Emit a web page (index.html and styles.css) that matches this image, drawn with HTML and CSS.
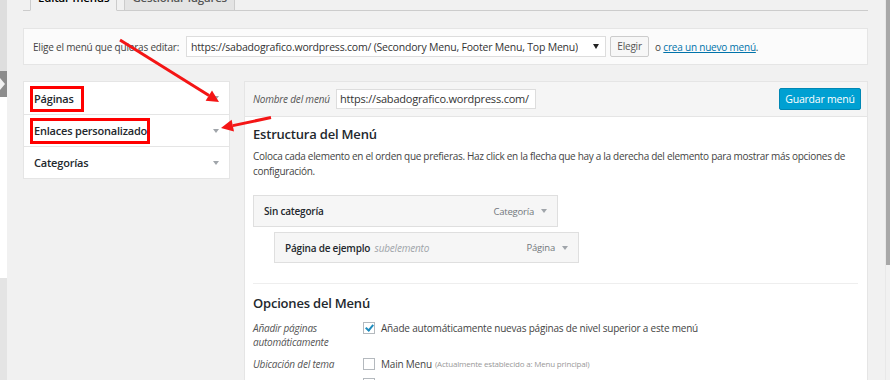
FILE: index.html
```html
<!DOCTYPE html>
<html lang="es">

<head>
    <meta charset="UTF-8">
    <title>Menús</title>
    <link rel="stylesheet" href="styles.css">
</head>

<body>
    <div class="page">
        <!-- collapsed admin sidebar edge -->
        <div class="edge">
            <div class="edge-top"></div>
            <div class="edge-toggle">
                <svg width="7" height="26" viewBox="0 0 7 26">
                    <polygon points="0,0 7,0 7,26 0,26 0,19 5,13 0,7" fill="#8c8c8c" />
                </svg>
            </div>
            <div class="edge-mid"></div>
            <div class="edge-bottom"></div>
        </div>

        <div class="wrap">
            <div class="tabs">
                <span class="tab active">Editar menús</span>
                <span class="tab">Gestionar lugares</span>
            </div>

            <div class="manage">
                <span class="label">Elige el menú que quieras editar:</span>
                <span class="select"><span class="select-text">https://sabadografico.wordpress.com/ (Secondory Menu, Footer Menu, Top Menu)</span><i class="select-arrow"></i></span>
                <span class="btn">Elegir</span>
                <span class="or">o <a href="#">crea un nuevo menú</a>.</span>
            </div>

            <div class="cols">
                <div class="accordion">
                    <div class="acc-row first"><span class="mark">Páginas</span><i class="caret"></i></div>
                    <div class="acc-row"><span class="mark wide">Enlaces personalizado</span><i class="caret"></i></div>
                    <div class="acc-row"><span class="acc-title">Categorías</span><i class="caret"></i></div>
                </div>

                <div class="menu">
                    <div class="menu-head">
                        <span class="name-label">Nombre del menú</span>
                        <span class="name-input">https://sabadografico.wordpress.com/</span>
                        <span class="save">Guardar menú</span>
                    </div>
                    <div class="menu-body">
                        <h3>Estructura del Menú</h3>
                        <p class="help">Coloca cada elemento en el orden que prefieras. Haz click en la flecha que hay a la derecha del elemento para mostrar más opciones de configuración.</p>

                        <div class="item">
                            <span class="item-title">Sin categoría</span>
                            <span class="item-type">Categoría</span><i class="caret"></i>
                        </div>
                        <div class="item sub">
                            <span class="item-title">Página de ejemplo <em>subelemento</em></span>
                            <span class="item-type">Página</span><i class="caret"></i>
                        </div>

                        <div class="divider"></div>

                        <h3>Opciones del Menú</h3>
                        <div class="opt">
                            <span class="opt-label">Añadir páginas automáticamente</span>
                            <span class="opt-value"><i class="check on"></i>Añade automáticamente nuevas páginas de nivel superior a este menú</span>
                        </div>
                        <div class="opt">
                            <span class="opt-label">Ubicación del tema</span>
                            <span class="opt-list">
                                <span class="opt-value"><i class="check"></i>Main Menu <small>(Actualmente establecido a: Menu principal)</small></span>
                                <span class="opt-value"><i class="check on"></i>Secondary Menu</span>
                            </span>
                        </div>
                    </div>
                </div>
            </div>
        </div>

        <div class="scroll">
            <div class="thumb"></div>
        </div>

        <!-- red annotation arrows drawn over the page -->
        <svg class="arrows" width="890" height="380" viewBox="0 0 890 380">
            <line x1="120" y1="40" x2="209" y2="95.6" stroke="#f41515" stroke-width="3" />
            <polygon points="219,102 205.6,100.7 212,90.5" fill="#f41515" />
            <line x1="271" y1="117.5" x2="232.8" y2="125.6" stroke="#f41515" stroke-width="3" />
            <polygon points="221,128 234,131.5 231.6,119.7" fill="#f41515" />
        </svg>
    </div>
</body>

</html>
```

FILE: styles.css
```css
* {
    padding: 0;
    margin: 0;
    box-sizing: border-box;
}

body {
    width: 890px;
    height: 380px;
    overflow: hidden;
    background: #f1f1f1;
    font-family: "Open Sans", "Noto Sans", sans-serif;
    font-size: 10px;
    letter-spacing: -0.2px;
    color: #444;
}

.page {
    position: relative;
    height: 380px;
    display: flex;
}

/* sidebar edge */
.edge {
    width: 7px;
    display: flex;
    flex-direction: column;
}

.edge-top {
    height: 71px;
    background: #dedede;
}

.edge-toggle {
    height: 26px;
    display: flex;
}

.edge-mid {
    height: 181px;
    background: #fff;
}

.edge-bottom {
    flex: 1;
    background: #e4e4e4;
}

.wrap {
    width: 878px;
    padding: 0 17px 0 16px;
}

/* tabs */
.tabs {
    margin-top: -17px;
    padding-left: 7px;
    border-bottom: 1px solid #ccc;
    display: flex;
    gap: 7px;
}

.tab {
    padding: 5px 7px 3px;
    line-height: 18px;
    font-size: 11.5px;
    font-weight: 600;
    color: #555;
    background: #e4e4e4;
    border: 1px solid #ccc;
    margin-bottom: -1px;
}

.tab.active {
    background: #f1f1f1;
    border-bottom-color: #f1f1f1;
    color: #000;
}

/* menu chooser */
.manage {
    margin-top: 17px;
    height: 37px;
    padding-left: 9px;
    background: #fbfbfb;
    border: 1px solid #e5e5e5;
    display: flex;
    align-items: center;
}

.label {
    margin-right: 7px;
}

.select {
    width: 420px;
    height: 21px;
    padding: 0 4px;
    background: #fff;
    border: 1px solid #ddd;
    color: #333;
    font-size: 10.5px;
    display: flex;
    align-items: center;
    justify-content: space-between;
}

.select-text {
    white-space: nowrap;
    overflow: hidden;
}

.select-arrow {
    border-left: 3px solid transparent;
    border-right: 3px solid transparent;
    border-top: 5px solid #222;
    margin: 0 2px 0 6px;
}

.btn {
    margin-left: 4px;
    width: 39px;
    height: 21px;
    line-height: 19px;
    text-align: center;
    background: #f7f7f7;
    border: 1px solid #ccc;
    border-radius: 2px;
    color: #555;
}

.or {
    margin-left: 6px;
}

.or a {
    color: #0073aa;
}

/* columns */
.cols {
    margin-top: 16px;
    display: flex;
    gap: 14px;
    align-items: flex-start;
}

.accordion {
    width: 207px;
    background: #fff;
    border: 1px solid #e5e5e5;
}

.acc-row {
    height: 32px;
    padding: 0 10px 0 6px;
    border-top: 1px solid #e5e5e5;
    display: flex;
    align-items: center;
    justify-content: space-between;
    font-size: 11px;
    font-weight: 600;
    color: #23282d;
}

.acc-row.first {
    border-top: none;
}

.acc-title {
    padding-left: 4px;
}

.mark {
    display: inline-block;
    line-height: 20px;
    padding: 0 7px 0 1px;
    border: 3px solid #f00;
    margin-top: 2px;
}

.mark.wide {
    padding-right: 0;
    margin-top: 0;
}

.caret {
    border-left: 3px solid transparent;
    border-right: 3px solid transparent;
    border-top: 4px solid #a0a5aa;
}

/* menu editor */
.menu {
    width: 624px;
    height: 320px;
    background: #fff;
    border: 1px solid #e5e5e5;
}

.menu-head {
    height: 35px;
    padding: 0 6px 0 8px;
    background: #f5f5f5;
    border-bottom: 1px solid #e5e5e5;
    display: flex;
    align-items: center;
}

.name-label {
    font-style: italic;
    color: #555;
    width: 83px;
}

.name-input {
    width: 200px;
    height: 20px;
    padding: 0 3px;
    background: #fff;
    border: 1px solid #ddd;
    font-size: 11px;
    line-height: 18px;
    color: #333;
}

.save {
    margin-left: auto;
    width: 82px;
    height: 22px;
    line-height: 20px;
    text-align: center;
    background: #00a0d2;
    border: 1px solid #0087b4;
    border-radius: 2px;
    color: #fff;
    font-size: 10.5px;
}

.menu-body {
    padding: 8px 9px 0 8px;
}

h3 {
    font-size: 13px;
    font-weight: 600;
    color: #23282d;
    line-height: 18px;
}

.help {
    margin-top: 6px;
    margin-right: -12px;
    line-height: 15px;
    letter-spacing: -0.3px;
}

.item {
    margin-top: 16px;
    width: 305px;
    height: 32px;
    padding: 0 10px 0 10px;
    background: #f6f6f6;
    border: 1px solid #dfdfdf;
    display: flex;
    align-items: center;
    gap: 7px;
}

.item.sub {
    margin-top: 5px;
    margin-left: 21px;
    height: 31px;
}

.item-title {
    flex: 1;
    font-weight: 600;
    color: #23282d;
}

.item-title em {
    margin-left: 2px;
    font-weight: 400;
    color: #a0a5aa;
}

.item-type {
    color: #72777c;
    font-size: 9.5px;
}

.divider {
    margin: 20px 0 10px;
    border-top: 1px solid #eee;
}

.opt {
    margin-top: 8px;
    display: flex;
    align-items: flex-start;
}

.opt+.opt {
    margin-top: 7px;
}

.opt-label {
    width: 110px;
    font-style: italic;
    color: #555;
    line-height: 14px;
    padding-top: 1px;
}

.opt-list {
    display: flex;
    flex-direction: column;
    gap: 5px;
}

.opt-value {
    display: flex;
    align-items: center;
    line-height: 14px;
    padding-top: 1px;
}

.opt-value small {
    margin-left: 3px;
    font-size: 8px;
    color: #999;
}

.check {
    width: 12px;
    height: 12px;
    margin-right: 6px;
    background: #fff;
    border: 1px solid #b4b9be;
    position: relative;
}

.check.on::after {
    content: "";
    position: absolute;
    left: 3px;
    top: 0px;
    width: 3px;
    height: 6px;
    border-right: 2px solid #1e8cbe;
    border-bottom: 2px solid #1e8cbe;
    transform: rotate(40deg);
}

/* scrollbar */
.scroll {
    width: 5px;
    background: #f1f1f1;
    border-left: 1px solid #e8e8e8;
}

.thumb {
    height: 265px;
    background: #a8a8a8;
}

.arrows {
    position: absolute;
    left: 0;
    top: 0;
    pointer-events: none;
}
```
